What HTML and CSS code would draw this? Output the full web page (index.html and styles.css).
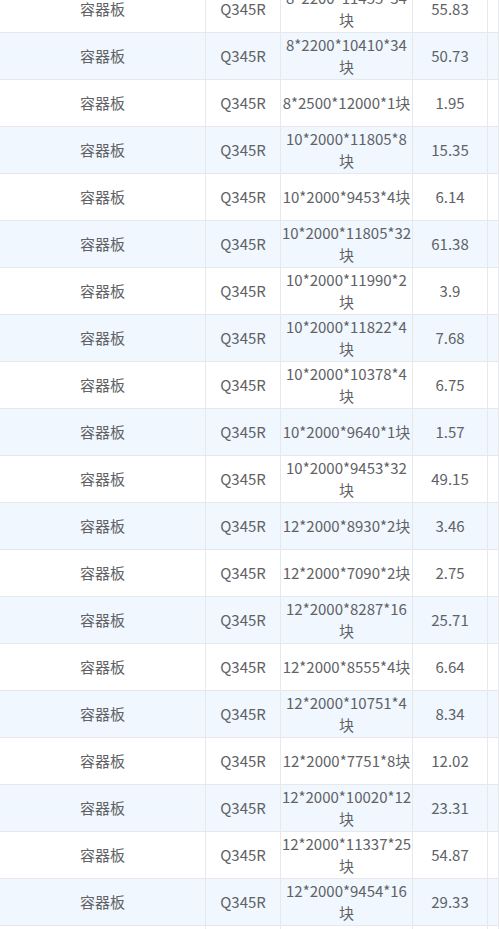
FILE: index.html
```html
<!DOCTYPE html>
<html lang="zh-CN">
<head>
<meta charset="utf-8">
<title>容器板</title>
<link rel="stylesheet" href="styles.css">
</head>
<body>
<div class="table">
  <div class="row"><div class="cell">容器板</div><div class="cell">Q345R</div><div class="cell">8*2200*11455*34块</div><div class="cell">55.83</div><div class="cell"></div></div>
  <div class="row"><div class="cell">容器板</div><div class="cell">Q345R</div><div class="cell">8*2200*10410*34块</div><div class="cell">50.73</div><div class="cell"></div></div>
  <div class="row"><div class="cell">容器板</div><div class="cell">Q345R</div><div class="cell">8*2500*12000*1块</div><div class="cell">1.95</div><div class="cell"></div></div>
  <div class="row"><div class="cell">容器板</div><div class="cell">Q345R</div><div class="cell">10*2000*11805*8块</div><div class="cell">15.35</div><div class="cell"></div></div>
  <div class="row"><div class="cell">容器板</div><div class="cell">Q345R</div><div class="cell">10*2000*9453*4块</div><div class="cell">6.14</div><div class="cell"></div></div>
  <div class="row"><div class="cell">容器板</div><div class="cell">Q345R</div><div class="cell">10*2000*11805*32块</div><div class="cell">61.38</div><div class="cell"></div></div>
  <div class="row"><div class="cell">容器板</div><div class="cell">Q345R</div><div class="cell">10*2000*11990*2块</div><div class="cell">3.9</div><div class="cell"></div></div>
  <div class="row"><div class="cell">容器板</div><div class="cell">Q345R</div><div class="cell">10*2000*11822*4块</div><div class="cell">7.68</div><div class="cell"></div></div>
  <div class="row"><div class="cell">容器板</div><div class="cell">Q345R</div><div class="cell">10*2000*10378*4块</div><div class="cell">6.75</div><div class="cell"></div></div>
  <div class="row"><div class="cell">容器板</div><div class="cell">Q345R</div><div class="cell">10*2000*9640*1块</div><div class="cell">1.57</div><div class="cell"></div></div>
  <div class="row"><div class="cell">容器板</div><div class="cell">Q345R</div><div class="cell">10*2000*9453*32块</div><div class="cell">49.15</div><div class="cell"></div></div>
  <div class="row"><div class="cell">容器板</div><div class="cell">Q345R</div><div class="cell">12*2000*8930*2块</div><div class="cell">3.46</div><div class="cell"></div></div>
  <div class="row"><div class="cell">容器板</div><div class="cell">Q345R</div><div class="cell">12*2000*7090*2块</div><div class="cell">2.75</div><div class="cell"></div></div>
  <div class="row"><div class="cell">容器板</div><div class="cell">Q345R</div><div class="cell">12*2000*8287*16块</div><div class="cell">25.71</div><div class="cell"></div></div>
  <div class="row"><div class="cell">容器板</div><div class="cell">Q345R</div><div class="cell">12*2000*8555*4块</div><div class="cell">6.64</div><div class="cell"></div></div>
  <div class="row"><div class="cell">容器板</div><div class="cell">Q345R</div><div class="cell">12*2000*10751*4块</div><div class="cell">8.34</div><div class="cell"></div></div>
  <div class="row"><div class="cell">容器板</div><div class="cell">Q345R</div><div class="cell">12*2000*7751*8块</div><div class="cell">12.02</div><div class="cell"></div></div>
  <div class="row"><div class="cell">容器板</div><div class="cell">Q345R</div><div class="cell">12*2000*10020*12块</div><div class="cell">23.31</div><div class="cell"></div></div>
  <div class="row"><div class="cell">容器板</div><div class="cell">Q345R</div><div class="cell">12*2000*11337*25块</div><div class="cell">54.87</div><div class="cell"></div></div>
  <div class="row"><div class="cell">容器板</div><div class="cell">Q345R</div><div class="cell">12*2000*9454*16块</div><div class="cell">29.33</div><div class="cell"></div></div>
  <div class="row row-empty"><div class="cell"></div><div class="cell"></div><div class="cell"></div><div class="cell"></div><div class="cell"></div></div>
</div>
</body>
</html>
```

FILE: styles.css
```css
html, body {
  margin: 0;
  padding: 0;
  background: #ffffff;
  overflow: hidden;
}

body {
  font-family: "Noto Sans CJK SC", "Noto Sans", sans-serif;
  font-size: 15px;
  color: #606266;
}

.table {
  margin-top: -14px;
  width: 100%;
}

.row {
  display: grid;
  grid-template-columns: 206px 75px 132px 75px 1fr;
  height: 47px;
  border-bottom: 1px solid #e6e8eb;
  box-sizing: border-box;
  background: #ffffff;
}

.row:nth-child(even) {
  background: #f0f7fe;
}

.cell {
  display: flex;
  align-items: center;
  justify-content: center;
  text-align: center;
  border-right: 1px solid #e6e8eb;
  line-height: 22px;
  padding: 0;
  overflow: hidden;
  box-sizing: border-box;
}
```
